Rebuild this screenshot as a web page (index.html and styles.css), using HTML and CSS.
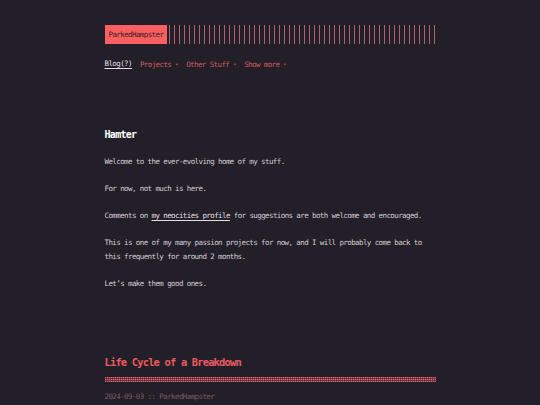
FILE: index.html
```html
<!DOCTYPE html>
<html lang="en">
<head>
<meta charset="utf-8">
<title>Hamter</title>
<link rel="stylesheet" href="styles.css">
</head>
<body>
<div class="container">
  <header class="header">
    <div class="header-top">
      <a class="logo" href="#">ParkedHampster</a>
      <div class="logo-bars"></div>
    </div>
    <nav class="menu">
      <a class="menu-item current" href="#">Blog(?)</a>
      <span class="menu-item">Projects <span class="caret">▾</span></span>
      <span class="menu-item">Other Stuff <span class="caret">▾</span></span>
      <span class="menu-item">Show more <span class="caret">▾</span></span>
    </nav>
  </header>

  <main class="content">
    <section class="intro">
      <h1 class="intro-title">Hamter</h1>
      <p>Welcome to the ever-evolving home of my stuff.</p>
      <p>For now, not much is here.</p>
      <p>Comments on <a class="link" href="#">my neocities profile</a> for suggestions are both welcome and encouraged.</p>
      <p>This is one of my many passion projects for now, and I will probably come back to this frequently for around 2 months.</p>
      <p>Let’s make them good ones.</p>
    </section>

    <article class="post">
      <h2 class="post-title">Life Cycle of a Breakdown</h2>
      <div class="post-rule"></div>
      <div class="post-meta">2024-09-03 :: ParkedHampster</div>
    </article>
  </main>
</div>
</body>
</html>
```

FILE: styles.css
```css
html, body {
  margin: 0;
  padding: 0;
  background: #221f29;
}

body {
  font-family: "DejaVu Sans Mono", "Liberation Mono", monospace;
  font-size: 7.5px;
  letter-spacing: -0.6px;
  line-height: 14px;
  color: #d2ced4;
}

.container {
  width: 331px;
  margin: 0 auto;
  padding-top: 25px;
}

.header-top {
  display: flex;
  align-items: stretch;
  height: 19px;
}

.logo {
  display: block;
  background: #fb5f62;
  color: #3a1c24;
  text-decoration: none;
  padding: 0 4px;
  line-height: 19px;
}

.logo-bars {
  flex: 1;
  margin-left: 2px;
  background: repeating-linear-gradient(90deg, rgba(225, 120, 132, 0.75) 0, rgba(225, 120, 132, 0.75) 1px, transparent 1px, transparent 5px);
}

.menu {
  display: flex;
  gap: 8px;
  margin-top: 13px;
}

.menu-item {
  color: #d4595d;
  text-decoration: none;
}

.menu-item.current {
  color: #e2dfe4;
  text-decoration: underline;
  text-decoration-thickness: 1px;
  text-underline-offset: 2px;
}

.caret {
  font-size: 5px;
  letter-spacing: 0;
  vertical-align: 1px;
}

.content {
  margin-top: 56px;
}

.intro-title {
  margin: 0 0 13px;
  font-size: 10px;
  letter-spacing: -0.7px;
  line-height: 14px;
  color: #ffffff;
  font-weight: bold;
}

.intro p {
  margin: 0 0 13px;
}

.link {
  color: #e2dfe4;
  text-decoration: underline;
  text-decoration-thickness: 1px;
  text-underline-offset: 2px;
}

.post {
  margin-top: 63px;
}

.post-title {
  margin: 0;
  font-size: 10.4px;
  letter-spacing: -0.8px;
  line-height: 16px;
  color: #ec5a5f;
  font-weight: bold;
}

.post-rule {
  margin-top: 7px;
  height: 5px;
  background:
    repeating-linear-gradient(0deg, transparent 0, transparent 1px, rgba(34, 31, 41, 0.55) 1px, rgba(34, 31, 41, 0.55) 2px),
    repeating-linear-gradient(90deg, #e0606c 0, #e0606c 1px, #8a3a48 1px, #8a3a48 2px);
}

.post-meta {
  margin-top: 8px;
  color: #7a585f;
}
```
